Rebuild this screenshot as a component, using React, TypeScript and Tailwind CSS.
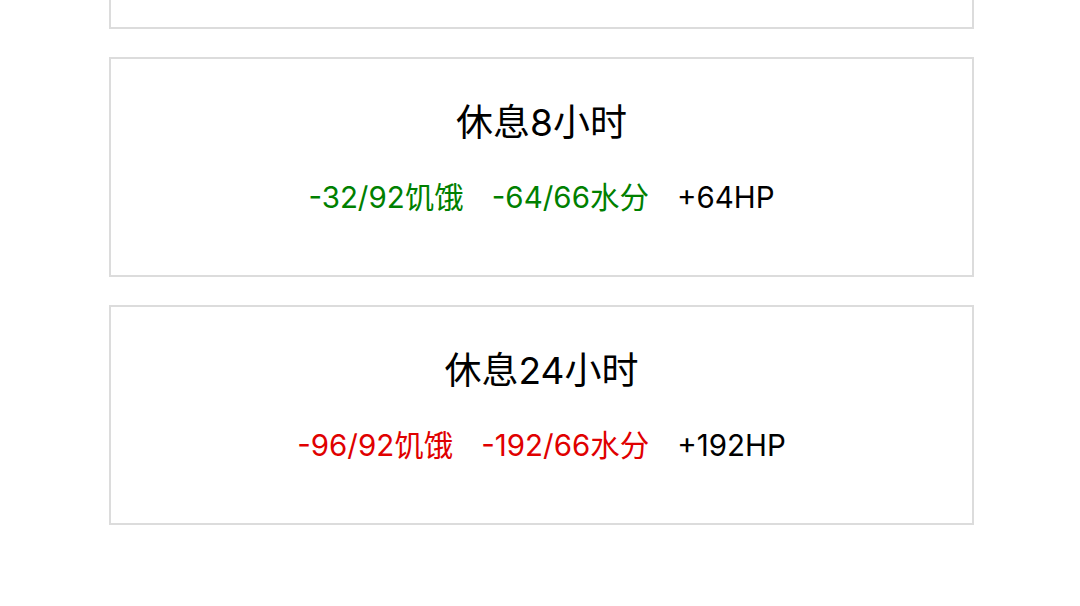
import React from "react";

interface Stat {
  text: string;
  tone: "good" | "bad" | "plain";
}

interface RestOption {
  id: number;
  title: string;
  stats: Stat[];
}

const options: RestOption[] = [
  {
    id: 1,
    title: "休息4小时",
    stats: [
      { text: "-16/92饥饿", tone: "good" },
      { text: "-32/66水分", tone: "good" },
      { text: "+32HP", tone: "plain" },
    ],
  },
  {
    id: 2,
    title: "休息8小时",
    stats: [
      { text: "-32/92饥饿", tone: "good" },
      { text: "-64/66水分", tone: "good" },
      { text: "+64HP", tone: "plain" },
    ],
  },
  {
    id: 3,
    title: "休息24小时",
    stats: [
      { text: "-96/92饥饿", tone: "bad" },
      { text: "-192/66水分", tone: "bad" },
      { text: "+192HP", tone: "plain" },
    ],
  },
];

const toneClass: Record<Stat["tone"], string> = {
  good: "text-[#008000]",
  bad: "text-[#e00000]",
  plain: "text-black",
};

const App: React.FC = () => {
  return (
    <div
      className="w-full h-[606px] overflow-hidden bg-white"
      style={{ fontFamily: 'Inter, "Noto Sans CJK SC", sans-serif' }}
    >
      {/* list is scrolled down, first card only shows its bottom edge */}
      <div className="w-[865px] ml-[109px] -mt-[191px] flex flex-col gap-[28px]">
        {options.map((opt) => (
          <div
            key={opt.id}
            className="h-[220px] border-2 border-[#dcdcdc] flex flex-col items-center pt-[40px]"
          >
            <h3 className="text-[37px] leading-[48px] text-black font-normal">
              {opt.title}
            </h3>
            <div className="mt-[30px] flex items-center gap-[28px] text-[29.5px] leading-[40px]">
              {opt.stats.map((s) => (
                <span key={s.text} className={toneClass[s.tone]}>
                  {s.text}
                </span>
              ))}
            </div>
          </div>
        ))}
      </div>
    </div>
  );
};

export default App;
